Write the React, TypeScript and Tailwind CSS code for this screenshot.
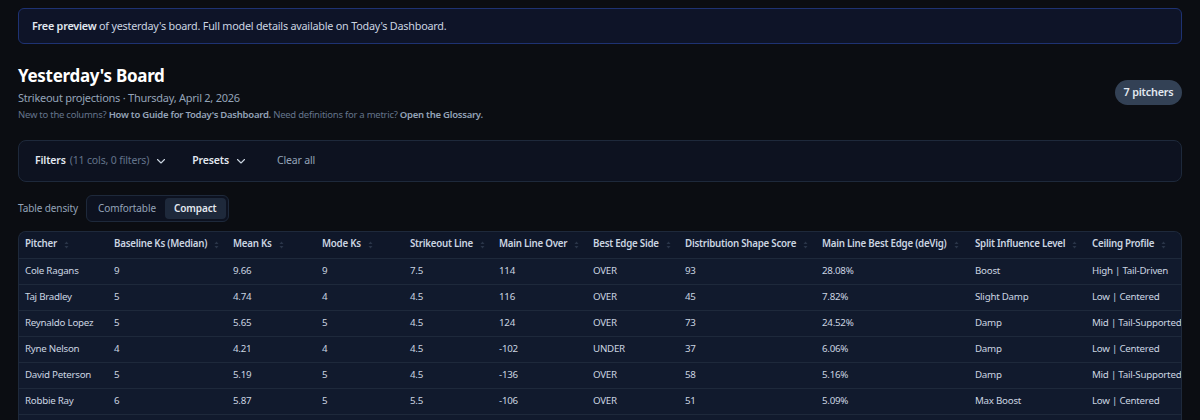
import React from "react";

const cols = [
  { label: "Pitcher", w: 89 },
  { label: "Baseline Ks (Median)", w: 119 },
  { label: "Mean Ks", w: 89 },
  { label: "Mode Ks", w: 88 },
  { label: "Strikeout Line", w: 89 },
  { label: "Main Line Over", w: 94 },
  { label: "Best Edge Side", w: 92 },
  { label: "Distribution Shape Score", w: 137 },
  { label: "Main Line Best Edge (deVig)", w: 153 },
  { label: "Split Influence Level", w: 117 },
  { label: "Ceiling Profile", w: 97 },
];

const rows = [
  ["Cole Ragans", "9", "9.66", "9", "7.5", "114", "OVER", "93", "28.08%", "Boost", "High | Tail-Driven"],
  ["Taj Bradley", "5", "4.74", "4", "4.5", "116", "OVER", "45", "7.82%", "Slight Damp", "Low | Centered"],
  ["Reynaldo Lopez", "5", "5.65", "5", "4.5", "124", "OVER", "73", "24.52%", "Damp", "Mid | Tail-Supported"],
  ["Ryne Nelson", "4", "4.21", "4", "4.5", "-102", "UNDER", "37", "6.06%", "Damp", "Low | Centered"],
  ["David Peterson", "5", "5.19", "5", "4.5", "-136", "OVER", "58", "5.16%", "Damp", "Mid | Tail-Supported"],
  ["Robbie Ray", "6", "5.87", "5", "5.5", "-106", "OVER", "51", "5.09%", "Max Boost", "Low | Centered"],
  ["Zack Wheeler", "7", "6.92", "7", "6.5", "-118", "OVER", "49", "4.12%", "Neutral", "Mid | Centered"],
];

function SortIcon() {
  return (
    <svg width="5" height="8" viewBox="0 0 5 8" className="ml-[7px] inline-block align-middle">
      <path d="M2.5 0.5 L4.5 3 H0.5 Z" fill="#2a3549" />
      <path d="M2.5 7.5 L4.5 5 H0.5 Z" fill="#2a3549" />
    </svg>
  );
}

function Chevron() {
  return (
    <svg width="10" height="10" viewBox="0 0 10 10" className="inline-block">
      <path d="M1.5 3.5 L5 7 L8.5 3.5" stroke="#cbd5e1" strokeWidth="1.1" fill="none" strokeLinecap="round" strokeLinejoin="round" />
    </svg>
  );
}

export default function App() {
  return (
    <div
      className="min-h-[420px] w-[1200px] overflow-hidden bg-[#0b0d12] px-[18px] pt-2 text-[#e2e8f0]"
      style={{ fontFamily: '"Noto Sans", "Open Sans", sans-serif' }}
    >
      <div className="flex h-[36px] items-center rounded-md border border-[#1e3272] bg-[#0e1428] px-[13px] text-[10.8px] tracking-[-0.22px] text-[#cbd5e1]">
        <span className="font-semibold text-[#e2e8f0]">Free preview</span>
        <span>&nbsp;of yesterday's board. Full model details available on Today's Dashboard.</span>
      </div>

      <div className="mt-[19px] flex items-center justify-between">
        <div>
          <div className="text-[17px] font-bold leading-[26px] tracking-[-0.3px] text-white">Yesterday's Board</div>
          <div className="text-[11px] leading-[18px] tracking-[-0.25px] text-[#94a3b8]">
            Strikeout projections · Thursday, April 2, 2026
          </div>
          <div className="mt-[1px] text-[9.5px] leading-[14px] tracking-[-0.25px] text-[#64748b]">
            New to the columns? <span className="font-semibold text-[#94a3b8]">How to Guide for Today's Dashboard.</span>{" "}
            Need definitions for a metric? <span className="font-semibold text-[#94a3b8]">Open the Glossary.</span>
          </div>
        </div>
        <div className="flex h-[25px] w-[67px] items-center justify-center rounded-full bg-[#334155] text-[10.8px] font-semibold tracking-[-0.2px] text-[#e2e8f0]">
          7 pitchers
        </div>
      </div>

      <div className="mt-[18px] flex h-[42px] items-center rounded-lg border border-[#1e293b] bg-[#0d1220] px-[16px] text-[10.5px] tracking-[-0.15px]">
        <span className="font-semibold text-[#e2e8f0]">Filters</span>
        <span className="ml-[4px] text-[#64748b]">(11 cols, 0 filters)</span>
        <span className="ml-[7px]"><Chevron /></span>
        <span className="ml-[26px] font-semibold text-[#e2e8f0]">Presets</span>
        <span className="ml-[7px]"><Chevron /></span>
        <span className="ml-[31px] text-[#94a3b8]">Clear all</span>
      </div>

      <div className="mt-[13px] flex items-center">
        <span className="text-[10px] tracking-[-0.1px] text-[#94a3b8]">Table density</span>
        <div className="ml-[8px] flex h-[27px] items-center rounded-md border border-[#1e293b] bg-[#0d1220] p-[2px] text-[10px] tracking-[-0.1px]">
          <span className="flex h-full items-center px-[9px] text-[#94a3b8]">Comfortable</span>
          <span className="flex h-full items-center rounded bg-[#1e293b] px-[9px] font-semibold text-[#e2e8f0]">Compact</span>
        </div>
      </div>

      <div className="mt-[9px] overflow-hidden rounded-t-lg border border-b-0 border-[#1e293b] bg-[#111a2d]">
        <table className="w-full table-fixed border-collapse text-[9.75px] tracking-[-0.25px]">
          <colgroup>
            {cols.map((c) => (
              <col key={c.label} style={{ width: c.w }} />
            ))}
          </colgroup>
          <thead>
            <tr className="h-[26px] border-b border-[#1e293b] bg-[#0f1729]">
              {cols.map((c) => (
                <th key={c.label} className="whitespace-nowrap px-[6px] text-left font-semibold text-[#cbd5e1]">
                  {c.label}
                  <SortIcon />
                </th>
              ))}
            </tr>
          </thead>
          <tbody>
            {rows.map((r) => (
              <tr key={r[0]} className="h-[26px] border-b border-[#1e293b]">
                {r.map((v, i) => (
                  <td key={i} className="whitespace-nowrap px-[6px] text-[#cbd5e1]">
                    {v}
                  </td>
                ))}
              </tr>
            ))}
          </tbody>
        </table>
      </div>
    </div>
  );
}
